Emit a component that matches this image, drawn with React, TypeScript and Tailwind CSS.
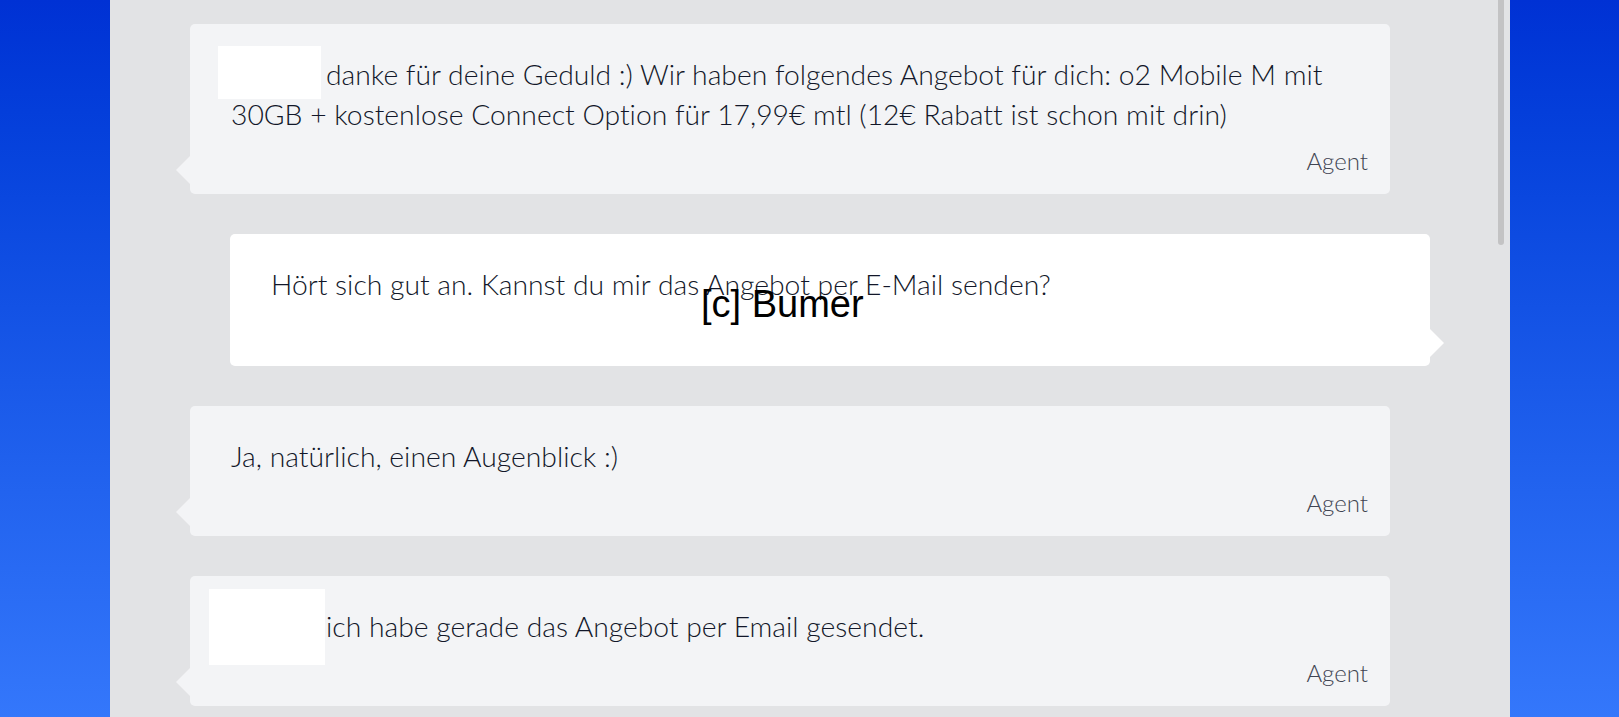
import React from "react";

type Msg = {
  from: "agent" | "user";
  text: string;
  redact?: { left: number; top: number; w: number; h: number };
};

const msgs: Msg[] = [
  {
    from: "agent",
    text: "danke für deine Geduld :) Wir haben folgendes Angebot für dich: o2 Mobile M mit 30GB + kostenlose Connect Option für 17,99€ mtl (12€ Rabatt ist schon mit drin)",
    redact: { left: 28, top: 22, w: 103, h: 53 },
  },
  { from: "user", text: "Hört sich gut an. Kannst du mir das Angebot per E-Mail senden?" },
  { from: "agent", text: "Ja, natürlich, einen Augenblick :)" },
  {
    from: "agent",
    text: "ich habe gerade das Angebot per Email gesendet.",
    redact: { left: 19, top: 13, w: 116, h: 76 },
  },
];

function Bubble({ m }: { m: Msg }) {
  const agent = m.from === "agent";
  return (
    <div
      className={
        "relative w-[1200px] rounded-[5px] pl-[41px] pr-[22px] pt-[30px] " +
        (agent ? "ml-[80px] bg-[#f3f4f6] pb-[17px]" : "ml-[120px] bg-white pb-[19px]")
      }
    >
      {m.redact && (
        <div
          className="absolute bg-white"
          style={{ left: m.redact.left, top: m.redact.top, width: m.redact.w, height: m.redact.h }}
        />
      )}
      <p className="pr-[40px] text-[28.3px] font-light leading-[40px] text-[#121729] [font-variant-ligatures:none]">
        {m.redact && <span className="inline-block w-[95px]" />}
        {m.text}
      </p>
      <div className="mt-[11px] h-[32px] text-right text-[24px] font-light leading-[32px] text-[#3f4452]">
        {agent ? "Agent" : ""}
      </div>
      {agent ? (
        <div className="absolute bottom-[10px] left-[-14px] h-0 w-0 border-y-[14px] border-r-[14px] border-y-transparent border-r-[#f3f4f6]" />
      ) : (
        <div className="absolute bottom-[9px] right-[-14px] h-0 w-0 border-y-[14px] border-l-[14px] border-y-transparent border-l-white" />
      )}
    </div>
  );
}

export default function App() {
  return (
    <div
      className="relative flex h-[717px] w-[1619px] overflow-hidden bg-gradient-to-b from-[#0031d4] to-[#3477fb]"
      style={{ fontFamily: "Lato, 'Noto Sans', sans-serif" }}
    >
      <div className="w-[110px] shrink-0" />
      <div className="relative h-full w-[1400px] shrink-0 bg-[#e2e3e5]">
        <div className="flex flex-col gap-[40px] pt-[24px]">
          {msgs.map((m, i) => (
            <Bubble key={i} m={m} />
          ))}
        </div>
        <div className="absolute right-[6px] top-0 h-[245px] w-[6px] rounded-b-full bg-[#c3c3c4]" />
      </div>
      <div
        className="absolute left-[701px] top-[285px] text-[38px] leading-none text-black"
        style={{ fontFamily: "'Liberation Sans', Arial, sans-serif" }}
      >
        [c] Bumer
      </div>
    </div>
  );
}
